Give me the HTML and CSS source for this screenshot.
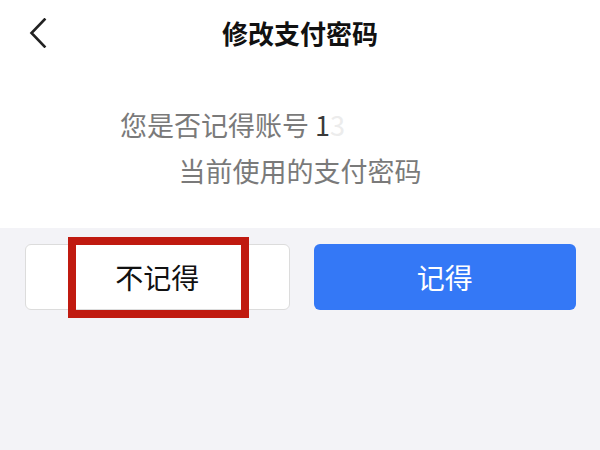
FILE: index.html
```html
<!DOCTYPE html>
<html lang="zh-CN">
<head>
<meta charset="utf-8">
<title>修改支付密码</title>
<link rel="stylesheet" href="styles.css">
</head>
<body>
<div class="top">
  <div class="nav">
    <div class="back">
      <svg width="18" height="30" viewBox="0 0 18 30"><path d="M15.5 1.5 L2.5 15 L15.5 28.5" fill="none" stroke="#222" stroke-width="2.6" stroke-linecap="square"/></svg>
    </div>
    <div class="title">修改支付密码</div>
    <div class="spacer"></div>
  </div>
  <div class="msg">
    <div class="line">您是否记得账号 <span class="num">1</span><span class="ghost">3</span><span class="hidden">888888888</span></div>
    <div class="line">当前使用的支付密码</div>
  </div>
</div>
<div class="actions">
  <div class="btn btn-plain">不记得<span class="mark"></span></div>
  <div class="btn btn-primary">记得</div>
</div>
</body>
</html>
```
FILE: styles.css
```css
html, body {
  margin: 0;
  padding: 0;
}
body {
  width: 600px;
  height: 450px;
  background: #f3f3f7;
  font-family: "Noto Sans CJK SC", "Noto Sans", sans-serif;
  overflow: hidden;
}
.top {
  background: #ffffff;
  height: 228px;
}
.nav {
  height: 64px;
  display: grid;
  grid-template-columns: 1fr auto 1fr;
  align-items: center;
}
.back {
  padding-left: 29px;
  display: flex;
  align-items: center;
  padding-top: 1px;
}
.back svg {
  display: block;
}
.title {
  font-size: 26px;
  font-weight: 700;
  color: #111;
}
.msg {
  padding-top: 38px;
  text-align: center;
  color: #7a7a7a;
  font-size: 27px;
  line-height: 46px;
}
.line {
  white-space: nowrap;
}
.num {
  color: #3a3a3a;
}
.ghost {
  color: #ececec;
}
.hidden {
  color: #ffffff;
}
.actions {
  display: flex;
  gap: 24px;
  padding: 16px 24px 0 25px;
}
.btn {
  flex: 1;
  height: 66px;
  box-sizing: border-box;
  border-radius: 6px;
  display: flex;
  align-items: center;
  justify-content: center;
  font-size: 28px;
  position: relative;
}
.btn-plain {
  background: #fff;
  border: 1px solid #dcdcdc;
  color: #111;
}
.btn-primary {
  background: #3478f6;
  color: #fff;
}
.mark {
  position: absolute;
  left: 42px;
  top: -8px;
  width: 181px;
  height: 81px;
  box-sizing: border-box;
  border: 8px solid #c01a10;
}
```
